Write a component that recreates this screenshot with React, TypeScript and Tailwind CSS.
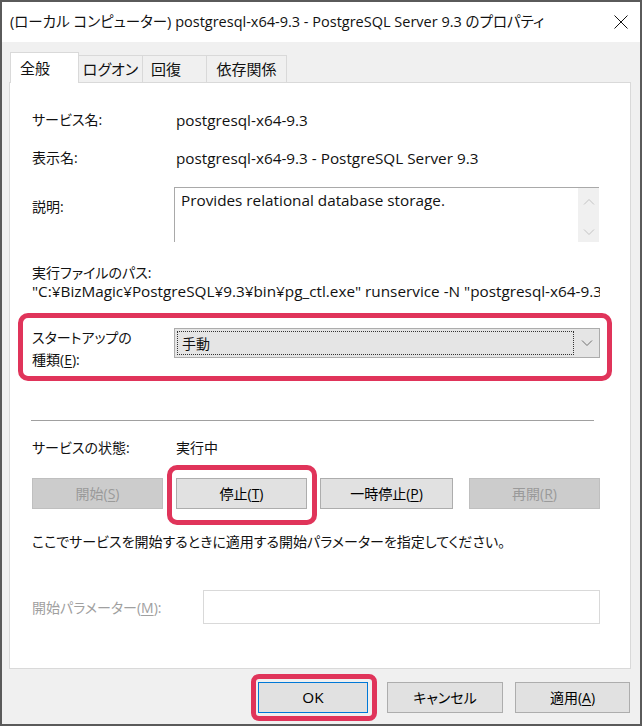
import React from "react";

const font = "font-['Open_Sans','Noto_Sans_CJK_JP',sans-serif] [font-feature-settings:'palt']";

// latin runs are a bit larger than the kana/kanji, like Meiryo UI
function L({ children }: { children: React.ReactNode }) {
  return <span className="text-[15.3px]">{children}</span>;
}

function Chevron({ dir, className }: { dir: "up" | "down"; className?: string }) {
  return (
    <svg width="12" height="8" viewBox="0 0 12 8" className={className}>
      <path
        d={dir === "up" ? "M1 6.5 L6 1.5 L11 6.5" : "M1 1.5 L6 6.5 L11 1.5"}
        fill="none"
        stroke="currentColor"
        strokeWidth="1"
      />
    </svg>
  );
}

function Btn({
  label,
  keyChar,
  width,
  disabled,
  isDefault,
}: {
  label: React.ReactNode;
  keyChar?: string;
  width: string;
  disabled?: boolean;
  isDefault?: boolean;
}) {
  return (
    <div
      className={`${width} h-[31px] flex items-center justify-center border ${
        disabled
          ? "bg-[#cccccc] border-[#bfbfbf] text-[#9a9a9a]"
          : isDefault
          ? "bg-[#e1e1e1] border-[#0078d7] text-black"
          : "bg-[#e1e1e1] border-[#adadad] text-black"
      }`}
    >
      {label}
      {keyChar && (
        <>
          (<span className="underline underline-offset-2">{keyChar}</span>)
        </>
      )}
    </div>
  );
}

export default function App() {
  return (
    <div className={`relative w-[642px] h-[726px] border-2 border-[#5a5a5a] bg-[#f0f0f0] text-[14px] text-[#111] ${font}`}>
      {/* title bar */}
      <div className="h-[40px] bg-white flex items-center justify-between pl-[8px] pr-[12px]">
        <span className="text-[14.5px]">
          (ローカル コンピューター) postgresql-x64-9.3 - PostgreSQL Server 9.3 のプロパティ
        </span>
        <svg width="14" height="14" viewBox="0 0 14 14">
          <path d="M0.5 0.5 L13.5 13.5 M13.5 0.5 L0.5 13.5" stroke="#111" strokeWidth="1" />
        </svg>
      </div>

      <div className="pt-[10px] pl-[7px] pr-[8px]">
        {/* tabs */}
        <div className="flex items-end h-[30px] pl-px text-[15px]">
          <div className="relative z-10 w-[69px] h-[31px] -mb-px bg-white border border-b-0 border-[#d9d9d9] flex items-center pl-[9px]">
            全般
          </div>
          <div className="w-[64px] h-[27px] border-t border-r border-[#d9d9d9] flex items-center justify-center">
            ログオン
          </div>
          <div className="w-[64px] h-[27px] border-t border-r border-[#d9d9d9] flex items-center pl-[8px]">
            回復
          </div>
          <div className="w-[80px] h-[27px] border-t border-r border-[#d9d9d9] flex items-center justify-center">
            依存関係
          </div>
        </div>

        {/* panel */}
        <div className="w-[622px] h-[587px] bg-white border border-[#d9d9d9] pl-[22px] pt-[27px]">
          <div className="flex h-[20px] leading-[20px]">
            <div className="w-[144px]">サービス名:</div>
            <L>postgresql-x64-9.3</L>
          </div>
          <div className="flex h-[20px] leading-[20px] mt-[18px]">
            <div className="w-[144px]">表示名:</div>
            <L>postgresql-x64-9.3 - PostgreSQL Server 9.3</L>
          </div>
          <div className="flex mt-[19px]">
            <div className="w-[142px] mt-[10px] leading-[20px]">説明:</div>
            <div className="w-[425px] h-[55px] border-t border-l border-[#a9a9a9] flex">
              <div className="flex-1 pl-[6px] pt-[2px] leading-[20px]">
                <L>Provides relational database storage.</L>
              </div>
              <div className="w-[21px] bg-[#f0f0f0] flex flex-col items-center justify-between pt-[10px] pb-[6px] text-[#c4c4c4]">
                <Chevron dir="up" />
                <Chevron dir="down" />
              </div>
            </div>
          </div>
          <div className="mt-[21px] h-[19px] leading-[19px]">実行ファイルのパス:</div>
          <div className="w-[568px] h-[19px] leading-[19px] whitespace-nowrap overflow-hidden">
            <L>"C:¥BizMagic¥PostgreSQL¥9.3¥bin¥pg_ctl.exe" runservice -N "postgresql-x64-9.3"</L>
          </div>

          {/* startup type */}
          <div className="flex mt-[26px]">
            <div className="w-[142px] leading-[22px]">
              スタートアップの
              <br />
              種類(<span className="underline underline-offset-2">E</span>):
            </div>
            <div className="w-[426px] h-[30px] mt-px bg-[#e5e5e5] border border-[#acacac] flex items-center pl-[2px]">
              <div className="w-[397px] h-[24px] border border-dotted border-[#333] flex items-center pl-[4px]">
                手動
              </div>
              <div className="flex-1 flex justify-center text-[#707070]">
                <Chevron dir="down" />
              </div>
            </div>
          </div>

          <div className="w-[563px] -ml-px h-px bg-[#a0a0a0] mt-[49px]" />

          <div className="flex leading-[20px] mt-[17px]">
            <div className="w-[144px]">サービスの状態:</div>
            <div>実行中</div>
          </div>

          <div className="flex mt-[20px]">
            <Btn label="開始" keyChar="S" width="w-[131px]" disabled />
            <div className="ml-[13px]">
              <Btn label="停止" keyChar="T" width="w-[131px]" />
            </div>
            <div className="ml-[13px]">
              <Btn label="一時停止" keyChar="P" width="w-[133px]" />
            </div>
            <div className="ml-[16px]">
              <Btn label="再開" keyChar="R" width="w-[131px]" disabled />
            </div>
          </div>

          <div className="mt-[23px] leading-[20px]">
            ここでサービスを開始するときに適用する開始パラメーターを指定してください。
          </div>

          <div className="flex items-center mt-[38px]">
            <div className="w-[171px] text-[#a0a0a0]">
              開始パラメーター(<span className="underline underline-offset-2">M</span>):
            </div>
            <div className="w-[397px] h-[34px] bg-white border border-[#d9d9d9]" />
          </div>
        </div>

        {/* dialog buttons */}
        <div className="flex justify-end mt-[13px] pr-[2px]">
          <Btn label={<L>OK</L>} width="w-[110px]" isDefault />
          <div className="ml-[19px]">
            <Btn label="キャンセル" width="w-[116px]" />
          </div>
          <div className="ml-[12px]">
            <Btn label="適用" keyChar="A" width="w-[115px]" />
          </div>
        </div>
      </div>

      {/* red highlight marks */}
      <div className="absolute left-[16px] top-[311px] w-[594px] h-[68px] border-[5px] border-[#e0345a] rounded-[10px]" />
      <div className="absolute left-[165px] top-[463px] w-[150px] h-[60px] border-[5px] border-[#e0345a] rounded-[10px]" />
      <div className="absolute left-[249px] top-[672px] w-[126px] h-[47px] border-[5px] border-[#e0345a] rounded-[8px]" />
    </div>
  );
}
